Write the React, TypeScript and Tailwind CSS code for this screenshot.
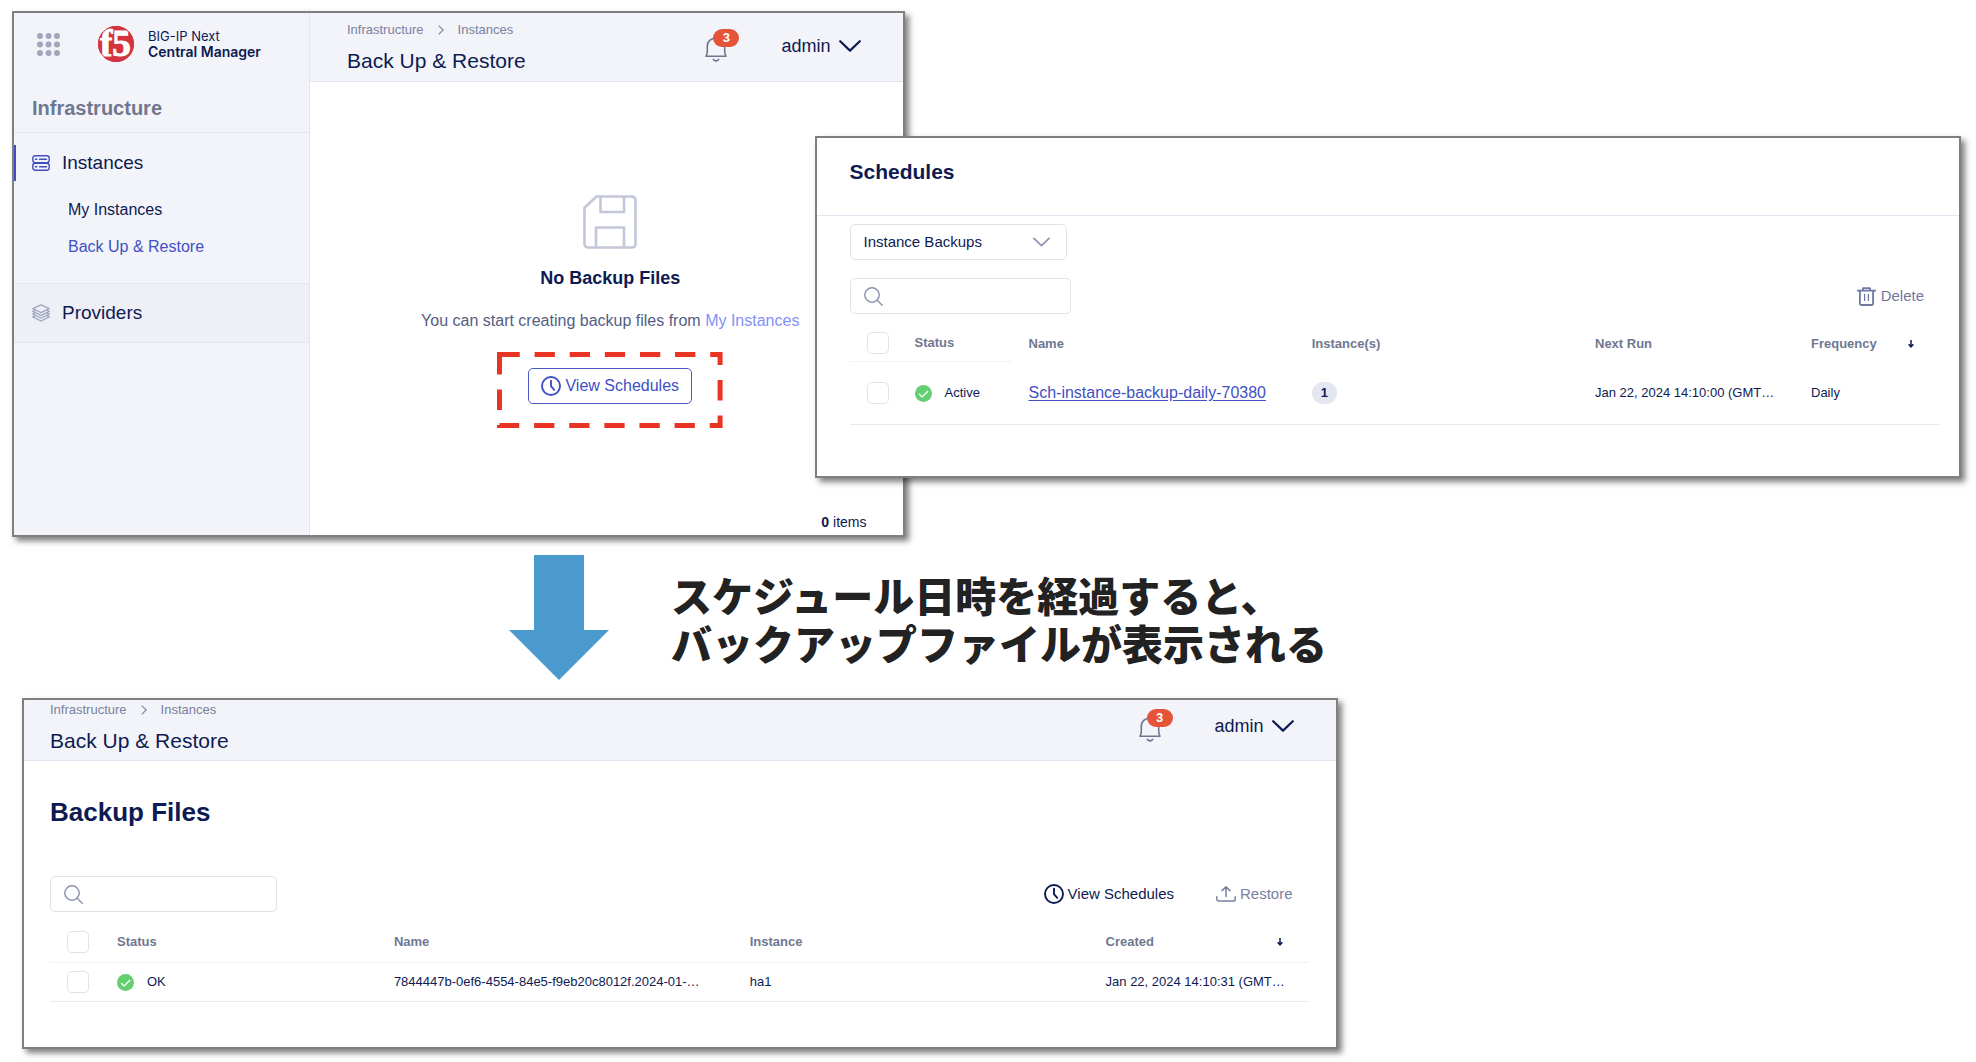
import type { ReactNode } from "react";

const FRAME =
  "border-2 border-[#7f7f7f] bg-white shadow-[4px_4px_6px_rgba(0,0,0,0.5)]";

function F5Logo() {
  return (
    <svg viewBox="0 0 36 36" className="size-9 shrink-0 overflow-visible" role="img" aria-label="F5">
      <circle cx="18" cy="18" r="18" fill="#d3343f" />
      <text
        x="2"
        y="30"
        fill="#fff"
        stroke="#fff"
        strokeWidth="1"
        fontFamily="Liberation Serif, serif"
        fontWeight="700"
        fontSize="37"
      >
        f5
      </text>
      <circle cx="18" cy="18" r="17.500" fill="none" stroke="#d3343f" strokeWidth="1" />
    </svg>
  );
}

function AppGridIcon() {
  const steps = [3, 11.5, 20];
  return (
    <svg viewBox="0 0 23 23" className="size-[23px]" fill="#a0a7ba" aria-hidden="true">
      {steps.map((y) => steps.map((x) => <circle key={`${x}-${y}`} cx={x} cy={y} r="3" />))}
    </svg>
  );
}

function ServerIcon() {
  return (
    <svg viewBox="0 0 18 16" className="h-4 w-[18px]" fill="none" stroke="#3f4fc0" strokeWidth="1.4" aria-hidden="true">
      <rect x="0.8" y="0.8" width="16.4" height="6.9" rx="2.4" />
      <rect x="0.8" y="8.3" width="16.4" height="6.9" rx="2.4" />
      <path d="M3.4 4.3h1.4M7.5 4.3h7M3.4 11.7h1.4M7.5 11.7h7" strokeLinecap="round" />
    </svg>
  );
}

function LayersIcon() {
  return (
    <svg viewBox="0 0 18 18" className="size-[18px]" fill="none" stroke="#a0a6c2" strokeWidth="1.3" strokeLinejoin="round" aria-hidden="true">
      <path d="M9 0.9l8.2 3.8L9 8.6 0.8 4.7z" />
      <path d="M3 6.2L0.8 7.4 9 11.3l8.2-3.9L15 6.2" />
      <path d="M3 8.9l-2.2 1.2L9 14l8.2-3.9L15 8.9" />
      <path d="M3 11.6l-2.2 1.3L9 17l8.2-4.1-2.2-1.3" />
    </svg>
  );
}

function BellIcon() {
  return (
    <svg viewBox="0 0 22 25" className="h-[25px] w-[22px]" fill="none" stroke="#6f7590" strokeWidth="1.6" strokeLinecap="round" strokeLinejoin="round" aria-hidden="true">
      <path d="M1 19.2h20c-.8-1.400-1.300-3-1.300-5.200V9c0-4.600-3.700-7.800-8.700-7.800S2.300 4.400 2.300 9v5c0 2.200-.5 3.800-1.300 5.200z" />
      <path d="M8.300 22.400c1.300 2 4.100 2 5.400 0" />
    </svg>
  );
}

function ChevronDown({ className }: { className: string }) {
  return (
    <svg viewBox="0 0 22 12" className={className} fill="none" stroke="currentColor" strokeWidth="2.2" strokeLinecap="round" strokeLinejoin="round" aria-hidden="true">
      <path d="M1.200 1.200L11 10.600l9.800-9.400" />
    </svg>
  );
}

function ChevronRight() {
  return (
    <svg viewBox="0 0 6 10" className="h-[10px] w-[6px]" fill="none" stroke="currentColor" strokeWidth="1.1" aria-hidden="true">
      <path d="M0.700 0.700L5.200 5 0.700 9.300" />
    </svg>
  );
}

function ClockIcon() {
  return (
    <svg viewBox="0 0 20 20" className="size-5" fill="none" stroke="currentColor" strokeWidth="1.9" strokeLinecap="round" aria-hidden="true">
      <circle cx="10" cy="10" r="9" />
      <path d="M10 4.600v5.600l3.200 3.700" />
    </svg>
  );
}

function SearchIcon() {
  return (
    <svg viewBox="0 0 19 19" className="size-[19px] shrink-0" fill="none" stroke="#8d93b0" strokeWidth="1.5" strokeLinecap="round" aria-hidden="true">
      <circle cx="8" cy="8" r="7.200" />
      <path d="M13.200 13.200l5 5" />
    </svg>
  );
}

function FloppyIcon() {
  return (
    <svg viewBox="0 0 54 54" className="size-[54px]" fill="none" stroke="#c3c7d8" strokeWidth="2.600" strokeLinejoin="round" aria-hidden="true">
      <path d="M13.500 1.500H49a3.500 3.500 0 0 1 3.500 3.500V49a3.500 3.500 0 0 1-3.500 3.500H5A3.500 3.500 0 0 1 1.500 49V12.700z" />
      <path d="M17.500 1.500v15.500h23.500V1.500" />
      <path d="M13 52.500V32.500h28v20" />
    </svg>
  );
}

function TrashIcon() {
  return (
    <svg viewBox="0 0 19 19" className="size-[19px]" fill="none" stroke="currentColor" strokeWidth="1.800" strokeLinejoin="round" aria-hidden="true">
      <path d="M0 3.600h19" />
      <path d="M6 3.300V1.200h7v2.100" />
      <path d="M2.900 3.600v12.600a1.800 1.800 0 0 0 1.800 1.800h9.600a1.800 1.800 0 0 0 1.800-1.800V3.600" />
      <path d="M7.600 7v7M11.400 7v7" strokeWidth="1.300" />
    </svg>
  );
}

function UploadIcon() {
  return (
    <svg viewBox="0 0 20 16" className="h-4 w-5" fill="none" stroke="currentColor" strokeWidth="1.500" strokeLinecap="round" strokeLinejoin="round" aria-hidden="true">
      <path d="M0.800 10.800v2.400A1.900 1.900 0 0 0 2.700 15.100h14.600a1.900 1.900 0 0 0 1.900-1.900v-2.400" />
      <path d="M10 10.500V1M6 4.600L10 0.900l4 3.700" />
    </svg>
  );
}

function CheckBadge() {
  return (
    <svg viewBox="0 0 17 17" className="size-[17px] shrink-0" aria-hidden="true">
      <circle cx="8.500" cy="8.500" r="8.500" fill="#64ce70" />
      <path d="M4 9l3.100 2.900 6-5.900" fill="none" stroke="#fff" strokeWidth="1.300" />
    </svg>
  );
}

function SortArrow() {
  return (
    <svg viewBox="0 0 6 8" className="h-2 w-[6px]" fill="none" stroke="#0e1a52" strokeWidth="1.500" aria-hidden="true">
      <path d="M3 0v6.600M0.600 4.200L3 6.800l2.400-2.600" />
    </svg>
  );
}

function PageHeader({ className }: { className: string }) {
  return (
    <header className={`flex items-start justify-between border-b border-[#e3e5f1] bg-[#f3f4f9] pr-[42px] ${className}`}>
      <div>
        <nav aria-label="Breadcrumb" className="flex h-4 items-center gap-[14px] text-[13px] leading-4 text-[#7a80a0]">
          <a href="#infrastructure">Infrastructure</a>
          <ChevronRight />
          <a href="#instances">Instances</a>
        </nav>
        <h1 className="mt-[9px] text-[21px] leading-7 text-[#0e1a52]">Back Up &amp; Restore</h1>
      </div>
      <div className="flex h-12 items-center gap-[42px]">
        <button type="button" aria-label="Notifications" className="relative mb-[2px] flex h-[33px] w-[34px] items-end">
          <BellIcon />
          <span className="absolute top-0 right-0 flex h-[18px] w-[26px] items-center justify-center rounded-full bg-[#e65437] text-[13px] font-bold text-white">
            3
          </span>
        </button>
        <button type="button" className="flex items-center gap-2 text-[18px] leading-6 text-[#0e1a52]">
          admin
          <ChevronDown className="h-3 w-[22px]" />
        </button>
      </div>
    </header>
  );
}

function SearchBox({ label, className }: { label: string; className: string }) {
  return (
    <label className={`flex h-[36px] items-center gap-2 rounded-[5px] border border-[#e1e3ec] px-[13px] ${className}`}>
      <SearchIcon />
      <input type="search" aria-label={label} className="min-w-0 flex-1 bg-transparent text-[15px] text-[#0e1a52] outline-none" />
    </label>
  );
}

function RowCheckbox({ label }: { label: string }) {
  return (
    <input
      type="checkbox"
      aria-label={label}
      className="block size-[22px] appearance-none rounded-[5px] border border-[#e1e3ec] bg-white"
    />
  );
}

function Th({ children, className = "" }: { children: ReactNode; className?: string }) {
  return <th scope="col" className={`pl-[17px] text-left font-bold whitespace-nowrap ${className}`}>{children}</th>;
}

function Td({ children, className = "" }: { children: ReactNode; className?: string }) {
  return <td className={`border-b border-[#e9eaf0] pl-[17px] whitespace-nowrap ${className}`}>{children}</td>;
}

function Sidebar() {
  return (
    <aside className="w-[296px] shrink-0 border-r border-[#e3e5f1] bg-[#f3f4f9] text-[#0e1a52]">
      <div className="flex h-[62px] items-center pl-[23px]">
        <button type="button" aria-label="Applications">
          <AppGridIcon />
        </button>
        <div className="ml-[38px] flex items-center gap-[14px]">
          <F5Logo />
          <p className="font-[Inter,sans-serif] text-[13px] leading-4">
            BIG-IP Next
            <strong className="block text-[14px] font-semibold">Central Manager</strong>
          </p>
        </div>
      </div>
      <h2 className="border-b border-[#e3e5f1] pt-[19px] pb-[10px] pl-[18px] text-[20px] leading-7 font-bold text-[#6f7890]">
        Infrastructure
      </h2>
      <nav aria-label="Infrastructure">
        <a href="#instances" className="mt-3 flex h-9 items-center gap-3 border-l-2 border-[#3f4fc0] pl-4 text-[19px]">
          <ServerIcon />
          Instances
        </a>
        <ul className="mt-[10px] pb-[18px] pl-[54px] text-[16px]">
          <li>
            <a href="#my-instances" className="flex h-[37px] items-center">My Instances</a>
          </li>
          <li>
            <a href="#back-up" aria-current="page" className="flex h-[37px] items-center text-[#4150c4]">
              Back Up &amp; Restore
            </a>
          </li>
        </ul>
        <a
          href="#providers"
          className="flex h-[60px] items-center gap-3 border-y border-[#e3e5f1] bg-[#eff0f5] pl-[18px] text-[19px]"
        >
          <LayersIcon />
          Providers
        </a>
      </nav>
    </aside>
  );
}

function EmptyBackups() {
  return (
    <section aria-label="Back Up and Restore" className={`flex min-w-0 grow-[892] basis-0 ${FRAME}`}>
      <Sidebar />
      <div className="flex min-w-0 flex-1 flex-col">
        <PageHeader className="pt-[9px] pb-[6px] pl-[37px]" />
        <div className="mt-[113px] flex flex-col items-center pl-2">
          <FloppyIcon />
          <h2 className="mt-[15px] text-[18px] leading-7 font-bold text-[#0e1a52]">No Backup Files</h2>
          <p className="mt-[17px] text-[16px] leading-6 whitespace-nowrap text-[#555d85]">
            You can start creating backup files from{" "}
            <a href="#my-instances" className="text-[#8390f5]">My Instances</a>
          </p>
          <div className="relative mt-[19px] px-[31px] pt-4 pb-6">
            <svg className="pointer-events-none absolute inset-0 size-full overflow-visible" viewBox="0 0 228 76" preserveAspectRatio="none" aria-hidden="true">
              <rect x="2.500" y="2.500" width="223" height="71" fill="none" stroke="#e93323" strokeWidth="5" strokeDasharray="20.500 15" />
            </svg>
            <button type="button" className="flex h-9 items-center gap-1 rounded-[5px] border border-[#4b5ac6] px-3 text-[16px] text-[#4150c4]">
              <ClockIcon />
              View Schedules
            </button>
          </div>
        </div>
        <p className="mt-[84px] pr-9 pb-[3px] text-right text-[14px] leading-5 text-[#0e1a52]">
          <b>0</b> items
        </p>
      </div>
    </section>
  );
}

function Schedules() {
  return (
    <section aria-labelledby="schedules-title" className={`z-10 mt-[125px] -ml-[90px] min-w-0 grow-[1147] basis-0 self-start pb-[51px] ${FRAME}`}>
      <h2 id="schedules-title" className="border-b border-[#e3e5f1] pt-5 pb-[29px] pl-[33px] text-[21px] leading-7 font-bold text-[#0e1a52]">
        Schedules
      </h2>
      <div className="pt-2 pr-[19px] pl-[33px]">
        <div className="relative w-[217px]">
          <select aria-label="Schedule type" className="block h-9 w-full appearance-none rounded-[5px] border border-[#e1e3ec] bg-white pl-[13px] text-[15px] text-[#0e1a52]">
            <option>Instance Backups</option>
          </select>
          <ChevronDown className="pointer-events-none absolute top-[13px] right-[17px] h-[10px] w-[17px] text-[#8d93b0]" />
        </div>
        <div className="mt-[18px] flex items-center justify-between pr-4">
          <SearchBox label="Search schedules" className="w-[221px]" />
          <button type="button" className="flex items-center gap-[5px] text-[15px] text-[#7078a0]">
            <TrashIcon />
            Delete
          </button>
        </div>
        <table className="mt-[11px] w-full table-fixed border-separate border-spacing-0 text-[13px] text-[#0e1a52]">
          <colgroup>
            <col className="w-[48px]" />
            <col className="w-[114px]" />
            <col />
            <col />
            <col className="w-[216px]" />
            <col className="w-[146px]" />
          </colgroup>
          <thead>
            <tr className="h-[37px] text-[#6f7890]">
              <Th className="border-b border-[#f1f2f6]">
                <RowCheckbox label="Select all schedules" />
              </Th>
              <Th className="border-b border-[#f1f2f6]">Status</Th>
              <Th>Name</Th>
              <Th>Instance(s)</Th>
              <Th>Next Run</Th>
              <Th>
                <div className="flex items-center justify-between pr-[26px]">
                  Frequency
                  <SortArrow />
                </div>
              </Th>
            </tr>
          </thead>
          <tbody>
            <tr className="h-[63px]">
              <Td>
                <RowCheckbox label="Select Sch-instance-backup-daily-70380" />
              </Td>
              <Td>
                <span className="flex items-center gap-[13px]">
                  <CheckBadge />
                  Active
                </span>
              </Td>
              <Td>
                <a href="#schedule" className="text-[16px] text-[#4150c4] underline underline-offset-2">
                  Sch-instance-backup-daily-70380
                </a>
              </Td>
              <Td>
                <span className="flex h-[22px] w-[25px] items-center justify-center rounded-full bg-[#e4e6f1] font-bold">1</span>
              </Td>
              <Td>Jan 22, 2024 14:10:00 (GMT…</Td>
              <Td>Daily</Td>
            </tr>
          </tbody>
        </table>
      </div>
    </section>
  );
}

function BackupFiles() {
  return (
    <section aria-labelledby="backup-files-title" className={`mt-[18px] ml-[10px] w-[67.5%] pb-[45px] ${FRAME}`}>
      <PageHeader className="pt-[2px] pb-[5px] pl-[26px]" />
      <div className="pr-[27px] pl-[26px]">
        <h2 id="backup-files-title" className="mt-[35px] text-[26px] leading-8 font-bold text-[#0e1a52]">
          Backup Files
        </h2>
        <div className="mt-12 flex items-center justify-between pr-4">
          <SearchBox label="Search backup files" className="w-[227px]" />
          <div className="flex items-center gap-[42px] text-[15px]">
            <button type="button" className="flex items-center gap-1 text-[#0e1a52]">
              <ClockIcon />
              View Schedules
            </button>
            <button type="button" className="flex items-center gap-1 text-[#7a80a0]">
              <UploadIcon />
              Restore
            </button>
          </div>
        </div>
        <table className="mt-[10px] w-full table-fixed border-separate border-spacing-0 text-[13px] text-[#0e1a52]">
          <colgroup>
            <col className="w-[50px]" />
            <col className="w-[22%]" />
            <col />
            <col />
            <col className="w-[220px]" />
          </colgroup>
          <thead>
            <tr className="h-[41px] text-[#6f7890] [&>th]:border-b [&>th]:border-[#f1f2f6]">
              <Th>
                <RowCheckbox label="Select all backup files" />
              </Th>
              <Th>Status</Th>
              <Th>Name</Th>
              <Th>Instance</Th>
              <Th>
                <div className="flex items-center justify-between pr-[26px]">
                  Created
                  <SortArrow />
                </div>
              </Th>
            </tr>
          </thead>
          <tbody>
            <tr className="h-[39px]">
              <Td>
                <RowCheckbox label="Select backup of ha1" />
              </Td>
              <Td>
                <span className="flex items-center gap-[13px]">
                  <CheckBadge />
                  OK
                </span>
              </Td>
              <Td>7844447b-0ef6-4554-84e5-f9eb20c8012f.2024-01-…</Td>
              <Td>ha1</Td>
              <Td>Jan 22, 2024 14:10:31 (GMT…</Td>
            </tr>
          </tbody>
        </table>
      </div>
    </section>
  );
}

export default function App() {
  return (
    <main className="bg-white pt-[11px] pr-[15px] pb-3 pl-3 font-['Liberation_Sans',sans-serif]">
      <div className="flex">
        <EmptyBackups />
        <Schedules />
      </div>
      <div className="mt-[18px] flex items-center gap-[62px] pl-[497px]">
        <svg viewBox="0 0 100 125" className="h-[125px] w-[100px] shrink-0" aria-hidden="true">
          <path d="M25 0h50v75h25L50 125 0 75h25z" fill="#4a9acf" />
        </svg>
        <p lang="ja" className="font-['Noto_Sans_CJK_JP',sans-serif] text-[41px] leading-[48px] font-black text-[#222]">
          スケジュール日時を経過すると、
          <br />
          バックアップファイルが表示される
        </p>
      </div>
      <BackupFiles />
    </main>
  );
}
